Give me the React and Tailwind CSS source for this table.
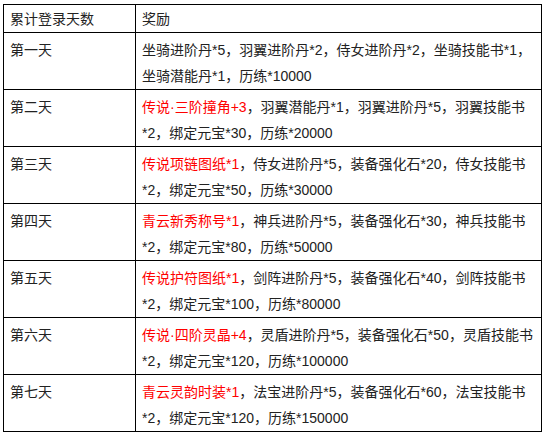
const rows = [
  {
    day: '第一天',
    lines: [
      [null, '坐骑进阶丹*5，羽翼进阶丹*2，侍女进阶丹*2，坐骑技能书*1，'],
      [null, '坐骑潜能丹*1，历练*10000'],
    ],
  },
  {
    day: '第二天',
    lines: [
      ['传说·三阶撞角+3', '，羽翼潜能丹*1，羽翼进阶丹*5，羽翼技能书'],
      [null, '*2，绑定元宝*30，历练*20000'],
    ],
  },
  {
    day: '第三天',
    lines: [
      ['传说项链图纸*1', '，侍女进阶丹*5，装备强化石*20，侍女技能书'],
      [null, '*2，绑定元宝*50，历练*30000'],
    ],
  },
  {
    day: '第四天',
    lines: [
      ['青云新秀称号*1', '，神兵进阶丹*5，装备强化石*30，神兵技能书'],
      [null, '*2，绑定元宝*80，历练*50000'],
    ],
  },
  {
    day: '第五天',
    lines: [
      ['传说护符图纸*1', '，剑阵进阶丹*5，装备强化石*40，剑阵技能书'],
      [null, '*2，绑定元宝*100，历练*80000'],
    ],
  },
  {
    day: '第六天',
    lines: [
      ['传说·四阶灵晶+4', '，灵盾进阶丹*5，装备强化石*50，灵盾技能书'],
      [null, '*2，绑定元宝*120，历练*100000'],
    ],
  },
  {
    day: '第七天',
    lines: [
      ['青云灵韵时装*1', '，法宝进阶丹*5，装备强化石*60，法宝技能书'],
      [null, '*2，绑定元宝*120，历练*150000'],
    ],
  },
]

export default function App() {
  return (
    <div className="w-[545px] h-[436px] bg-white pt-[4px] pl-[3px] font-['Liberation_Sans','Noto_Sans_CJK_SC',sans-serif] text-[14px] text-[#222]">
      <table className="w-[539px] border-collapse">
        <thead>
          <tr>
            <td className="w-[132px] border border-black pl-[6px] pt-[1px] leading-[26px] align-top">累计登录天数</td>
            <td className="border border-black pl-[6px] pt-[1px] leading-[26px] align-top">奖励</td>
          </tr>
        </thead>
        <tbody>
          {rows.map((r) => (
            <tr key={r.day}>
              <td className="border border-black pl-[6px] pt-[4px] leading-[26px] align-top">{r.day}</td>
              <td className="border border-black pl-[6px] pt-[4px] leading-[26px] align-top">
                {r.lines.map((l, i) => (
                  <div key={i} className="whitespace-nowrap">
                    {l[0] ? <span className="text-[#ff0000]">{l[0]}</span> : null}
                    {l[1]}
                  </div>
                ))}
              </td>
            </tr>
          ))}
        </tbody>
      </table>
    </div>
  )
}
